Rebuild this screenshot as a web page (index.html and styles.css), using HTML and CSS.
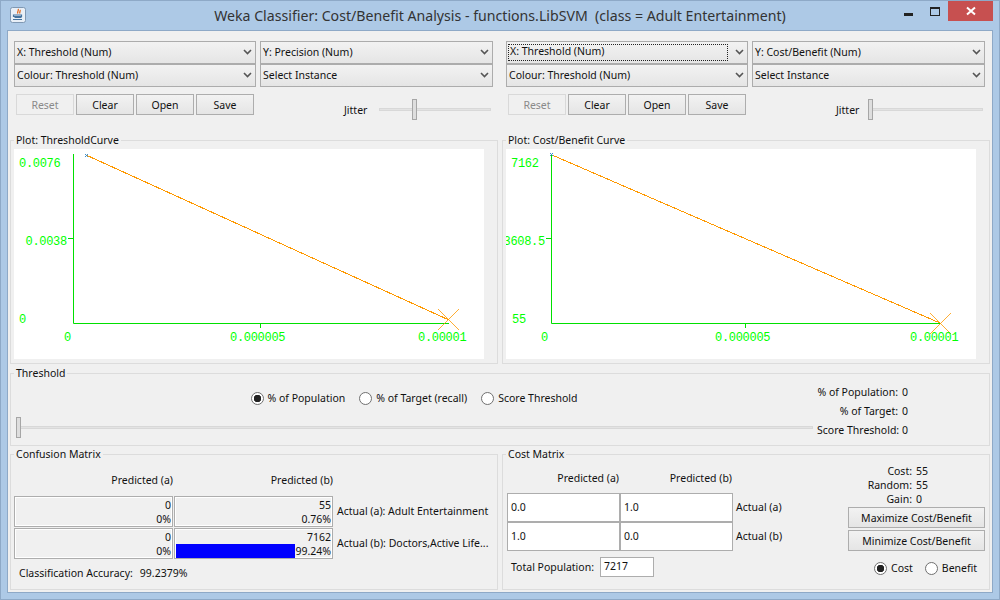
FILE: index.html
```html
<!DOCTYPE html>
<html lang="en">
<head>
    <meta charset="UTF-8">
    <title>Weka Classifier: Cost/Benefit Analysis</title>
    <link rel="stylesheet" href="styles.css">
</head>
<body>
    <div class="window">
        <div class="titlebar">
            <svg class="app-icon" width="16" height="16" viewBox="0 0 16 16">
                <rect x="0.5" y="0.5" width="15" height="15" rx="2" fill="#e8eff7" stroke="#7f98b3"/>
                <path d="M8 2c1.5 1.5-1.5 2.500 0 4.500M10 3c.8 1-1 2 0 3.500" fill="none" stroke="#e2681c" stroke-width="1.300"/>
                <path d="M3.500 8h8v1.500h-8zM4.500 10.500h7M3 12.500h9" fill="none" stroke="#44739f" stroke-width="1.200"/>
            </svg>
            <div class="title">Weka Classifier: Cost/Benefit Analysis - functions.LibSVM  (class = Adult Entertainment)</div>
            <div class="window-buttons">
                <span class="btn-min"></span>
                <span class="btn-max"></span>
                <span class="btn-close">
                    <svg width="10" height="10" viewBox="0 0 10 10"><path d="M1 1.500l8 7M9 1.500l-8 7" stroke="#fff" stroke-width="2"/></svg>
                </span>
            </div>
        </div>

        <div class="content">
            <div class="pane">
                <div class="combos">
                    <div class="combo">X: Threshold (Num)<svg class="arrow" width="9" height="6" viewBox="0 0 9 6"><path d="M1 1l3.500 3.500L8 1" fill="none" stroke="#555" stroke-width="1.600"/></svg></div>
                    <div class="combo">Y: Precision (Num)<svg class="arrow" width="9" height="6" viewBox="0 0 9 6"><path d="M1 1l3.500 3.500L8 1" fill="none" stroke="#555" stroke-width="1.600"/></svg></div>
                    <div class="combo">Colour: Threshold (Num)<svg class="arrow" width="9" height="6" viewBox="0 0 9 6"><path d="M1 1l3.500 3.500L8 1" fill="none" stroke="#555" stroke-width="1.600"/></svg></div>
                    <div class="combo">Select Instance<svg class="arrow" width="9" height="6" viewBox="0 0 9 6"><path d="M1 1l3.500 3.500L8 1" fill="none" stroke="#555" stroke-width="1.600"/></svg></div>
                </div>
                <div class="actions">
                    <button class="btn" disabled>Reset</button>
                    <button class="btn">Clear</button>
                    <button class="btn">Open</button>
                    <button class="btn">Save</button>
                    <div class="jitter">
                        <span>Jitter</span>
                        <input class="slider jitter-left" type="range" min="0" max="100" value="31">
                    </div>
                </div>
                <fieldset class="group">
                    <legend>Plot: ThresholdCurve</legend>
                    <svg class="plot" width="470" height="210" viewBox="14 149 470 210">
                        <path class="axis" d="M73.500 154V323.500H449M260.500 323.500V328M68 238.500H73.500"/>
                        <path class="curve" d="M86 155L449 320"/>
                        <path class="cross" d="M438 309L459 330M459 309L438 330"/>
                        <path class="marker" d="M85 154l3 3M88 154l-3 3"/>
                        <text x="19" y="167">0.0076</text>
                        <text x="25.500" y="244.500">0.0038</text>
                        <text x="19" y="323">0</text>
                        <text x="64" y="341">0</text>
                        <text x="230" y="341">0.000005</text>
                        <text x="418" y="341">0.00001</text>
                    </svg>
                </fieldset>
            </div>

            <div class="pane">
                <div class="combos">
                    <div class="combo"><span class="focus">X: Threshold (Num)</span><svg class="arrow" width="9" height="6" viewBox="0 0 9 6"><path d="M1 1l3.500 3.500L8 1" fill="none" stroke="#555" stroke-width="1.600"/></svg></div>
                    <div class="combo">Y: Cost/Benefit (Num)<svg class="arrow" width="9" height="6" viewBox="0 0 9 6"><path d="M1 1l3.500 3.500L8 1" fill="none" stroke="#555" stroke-width="1.600"/></svg></div>
                    <div class="combo">Colour: Threshold (Num)<svg class="arrow" width="9" height="6" viewBox="0 0 9 6"><path d="M1 1l3.500 3.500L8 1" fill="none" stroke="#555" stroke-width="1.600"/></svg></div>
                    <div class="combo">Select Instance<svg class="arrow" width="9" height="6" viewBox="0 0 9 6"><path d="M1 1l3.500 3.500L8 1" fill="none" stroke="#555" stroke-width="1.600"/></svg></div>
                </div>
                <div class="actions">
                    <button class="btn" disabled>Reset</button>
                    <button class="btn">Clear</button>
                    <button class="btn">Open</button>
                    <button class="btn">Save</button>
                    <div class="jitter">
                        <span>Jitter</span>
                        <input class="slider jitter-right" type="range" min="0" max="100" value="0">
                    </div>
                </div>
                <fieldset class="group">
                    <legend>Plot: Cost/Benefit Curve</legend>
                    <svg class="plot" width="470" height="210" viewBox="506 149 470 210">
                        <path class="axis" d="M551.500 154V323.500H940M745.500 323.500V328M546 238.500H551.500"/>
                        <path class="curve" d="M552 155L940 323"/>
                        <path class="cross" d="M930 313L951 334M951 313L930 334"/>
                        <path class="marker" d="M550 153l3 3M553 153l-3 3"/>
                        <text x="511" y="167">7162</text>
                        <text x="503.500" y="244.500">3608.5</text>
                        <text x="512" y="323">55</text>
                        <text x="541" y="341">0</text>
                        <text x="715" y="341">0.000005</text>
                        <text x="910" y="341">0.00001</text>
                    </svg>
                </fieldset>
            </div>

            <fieldset class="group threshold">
                <legend>Threshold</legend>
                <div class="threshold-main">
                    <div class="radios">
                        <label><input type="radio" name="mode" checked>% of Population</label>
                        <label><input type="radio" name="mode">% of Target (recall)</label>
                        <label><input type="radio" name="mode">Score Threshold</label>
                    </div>
                    <input class="slider threshold-slider" type="range" min="0" max="100" value="0">
                </div>
                <div class="stats threshold-stats">
                    <span>% of Population:</span><span>0</span>
                    <span>% of Target:</span><span>0</span>
                    <span>Score Threshold:</span><span>0</span>
                </div>
            </fieldset>

            <fieldset class="group confusion">
                <legend>Confusion Matrix</legend>
                <div class="matrix">
                    <div class="head">Predicted (a)</div>
                    <div class="head">Predicted (b)</div>
                    <div></div>
                    <div class="cell"><div>0</div><div>0%</div></div>
                    <div class="cell"><div>55</div><div>0.76%</div></div>
                    <div class="actual">Actual (a): Adult Entertainment</div>
                    <div class="cell"><div>0</div><div>0%</div></div>
                    <div class="cell"><div>7162</div><div class="bar-row"><span class="bar"></span>99.24%</div></div>
                    <div class="actual">Actual (b): Doctors,Active Life...</div>
                </div>
                <div class="accuracy"><span>Classification Accuracy:</span><span>99.2379%</span></div>
            </fieldset>

            <fieldset class="group cost">
                <legend>Cost Matrix</legend>
                <div class="cost-left">
                    <div class="cost-grid">
                        <div class="head">Predicted (a)</div>
                        <div class="head">Predicted (b)</div>
                        <div></div>
                        <div class="field">0.0</div>
                        <div class="field">1.0</div>
                        <div>Actual (a)</div>
                        <div class="field">1.0</div>
                        <div class="field">0.0</div>
                        <div>Actual (b)</div>
                    </div>
                    <div class="population">
                        <span>Total Population:</span>
                        <div class="field small">7217</div>
                    </div>
                </div>
                <div class="cost-right">
                    <div class="stats cost-stats">
                        <span>Cost:</span><span>55</span>
                        <span>Random:</span><span>55</span>
                        <span>Gain:</span><span>0</span>
                    </div>
                    <button class="btn wide">Maximize Cost/Benefit</button>
                    <button class="btn wide">Minimize Cost/Benefit</button>
                    <div class="radios cost-radios">
                        <label><input type="radio" name="kind" checked>Cost</label>
                        <label><input type="radio" name="kind">Benefit</label>
                    </div>
                </div>
            </fieldset>
        </div>
    </div>
</body>
</html>
```
FILE: styles.css
```css
* {
    box-sizing: border-box;
}

body {
    margin: 0;
    font-family: "Noto Sans", sans-serif;
    font-size: 10.500px;
    line-height: 14px;
    color: #111;
}

.window {
    width: 1000px;
    height: 600px;
    padding: 0 7px 7px;
    background-color: #adc9e6;
    border: 1px solid #8ea9c7;
    display: flex;
    flex-direction: column;
    overflow: hidden;
}

.titlebar {
    flex: none;
    height: 30px;
    margin: 0 -7px;
    display: grid;
    grid-template-columns: 1fr auto 1fr;
    align-items: start;
}

.app-icon {
    margin: 6px 0 0 9px;
}

.title {
    margin-top: 5px;
    font-size: 14.150px;
    line-height: 20px;
    color: #333;
    white-space: pre;
}

.window-buttons {
    justify-self: end;
    display: flex;
    margin-right: 6px;
}

.btn-min {
    width: 9px;
    height: 3px;
    margin: 12px 0 0;
    background-color: #222;
}

.btn-max {
    width: 10px;
    height: 9px;
    margin: 6px 8px 0 17px;
    border: 1px solid #222;
    border-top-width: 2px;
}

.btn-close {
    width: 45px;
    height: 20px;
    background-color: #c75050;
    display: flex;
    align-items: center;
    justify-content: center;
}

.content {
    flex: 1;
    min-height: 0;
    padding: 0 2px;
    background-color: #f0f0f0;
    outline: 1px solid #8ea9c7;
    display: grid;
    grid-template-columns: 488px 488px;
    column-gap: 4px;
    align-content: start;
}

.pane {
    padding-top: 10px;
}

.combos {
    padding-left: 4px;
    display: grid;
    grid-template-columns: 242px 233px;
    grid-auto-rows: 23px;
    column-gap: 4px;
}

.combo {
    padding: 0 2px 2px;
    border: 1px solid #acacac;
    background: linear-gradient(#f2f2f2, #e5e5e5);
    display: flex;
    align-items: center;
    justify-content: space-between;
}

.arrow {
    margin-right: 1px;
}

.focus {
    width: 220px;
    height: 17px;
    margin: 2px 0 0 -1px;
    padding-left: 2px;
    line-height: 15px;
    outline: 1px dotted #222;
    outline-offset: -1px;
}

.actions {
    margin-top: 7px;
    padding-left: 6px;
    display: flex;
    gap: 2px;
    align-items: flex-start;
}

.btn {
    width: 58px;
    height: 21px;
    padding: 0;
    border: 1px solid #adadad;
    background: linear-gradient(#f2f2f2, #e5e5e5);
    font: inherit;
    color: #111;
}

.btn:disabled {
    border-color: #d9d9d9;
    background: #f0f0f0;
    color: #8a8a8a;
}

.jitter {
    margin: 5px 0 0 88px;
    width: 147px;
    display: flex;
    align-items: center;
    justify-content: space-between;
}

.jitter span {
    margin-top: 1px;
}

.slider {
    appearance: none;
    -webkit-appearance: none;
    display: block;
    height: 21px;
    margin: 0;
    background: transparent;
}

.slider::-webkit-slider-runnable-track {
    height: 3px;
    background-color: #e3e3e3;
    box-shadow: inset 0 0 0 1px #d8d8d8;
}

.slider::-webkit-slider-thumb {
    -webkit-appearance: none;
    width: 5px;
    height: 21px;
    margin-top: -9px;
    border: 1px solid #a6a6a6;
    background-color: #dedede;
}

.jitter-left {
    width: 112px;
}

.jitter-right {
    width: 115px;
}

.group {
    margin: 0;
    min-width: 0;
    padding: 2px 3px 4px;
    border: 1px solid #dcdcdc;
}

.group legend {
    margin-left: 0;
    padding: 0 2px;
    line-height: 14px;
}

.pane .group {
    margin-top: 13px;
}

.plot {
    display: block;
    background-color: #fff;
}

.plot text {
    font-family: "Liberation Mono", monospace;
    font-size: 12px;
    letter-spacing: -0.300px;
    fill: #00ff00;
}

.axis {
    fill: none;
    stroke: #00e000;
}

.curve {
    fill: none;
    stroke: #ff9900;
    shape-rendering: crispEdges;
}

.cross {
    fill: none;
    stroke: #ff9900;
    stroke-width: 0.800;
}

.marker {
    fill: none;
    stroke: #3a8fd0;
}

.threshold {
    grid-column: 1 / 3;
    height: 80px;
    margin-top: 2px;
    padding: 0 3px;
    display: grid;
    grid-template-columns: 800px auto;
}

.threshold-main {
    padding-top: 11px;
}

.radios {
    display: flex;
    justify-content: center;
    gap: 14px;
}

.radios label {
    display: flex;
    align-items: center;
    gap: 4px;
}

.radios input {
    appearance: none;
    -webkit-appearance: none;
    width: 13px;
    height: 13px;
    margin: 0;
    border: 1px solid #707070;
    border-radius: 50%;
    background-color: #fff;
}

.radios input:checked {
    background: radial-gradient(circle, #222 0 3.500px, #fff 4px);
}

.threshold-slider {
    width: 797px;
    margin: 12px 0 0 2px;
}

.stats {
    display: grid;
    grid-template-columns: 81px auto;
    column-gap: 4px;
}

.stats span:nth-child(odd) {
    text-align: right;
    white-space: nowrap;
}

.threshold-stats {
    margin: 5px 0 0 3px;
    row-gap: 5px;
    align-content: start;
}

.confusion {
    height: 143px;
    margin-top: 1px;
}

.matrix {
    display: grid;
    grid-template-columns: 159px 159px auto;
    grid-template-rows: 32px 31px 31px;
    column-gap: 1px;
    row-gap: 1px;
}

.head {
    padding-top: 10px;
    text-align: right;
    white-space: nowrap;
}

.cell {
    padding: 1px 1px 0;
    border: 1px solid #adadad;
    box-shadow: inset 0 0 0 1px #fff;
    background-color: #f0f0f0;
    text-align: right;
}

.bar-row {
    display: flex;
    justify-content: flex-end;
}

.bar {
    flex: 1;
    height: 14px;
    background-color: #0000ff;
}

.actual {
    padding: 0 0 1px 3px;
    align-self: center;
    white-space: nowrap;
}

.accuracy {
    margin: 7px 0 0 5px;
    display: flex;
    gap: 7px;
}

.cost {
    height: 143px;
    margin-top: 1px;
    display: flex;
}

.cost-left {
    width: 341px;
    padding-left: 1px;
}

.cost-grid {
    display: grid;
    grid-template-columns: 113px 113px auto;
    grid-template-rows: 30px 29px 29px;
    align-items: center;
}

.cost-grid > div:nth-child(3n) {
    padding: 0 0 2px 3px;
}

.cost-grid .head {
    padding: 0 1px 0 0;
}

.field {
    height: 100%;
    padding: 0 0 2px 3px;
    border: 1px solid #adadad;
    background-color: #fff;
    display: flex;
    align-items: center;
}

.population {
    margin: 6px 0 0 4px;
    display: flex;
    align-items: center;
    gap: 9px;
}

.population span {
    width: 80px;
    white-space: nowrap;
}

.field.small {
    width: 54px;
    height: 20px;
}

.cost-right {
    margin-left: auto;
    width: 138px;
    display: flex;
    flex-direction: column;
    align-items: flex-start;
}

.cost-stats {
    grid-template-columns: 64px auto;
    margin: 1px 0;
}

.btn.wide {
    width: 137px;
    height: 21px;
    margin-bottom: 2px;
}

.cost-radios {
    margin: 8px 0 0 26px;
    gap: 12px;
}
```
